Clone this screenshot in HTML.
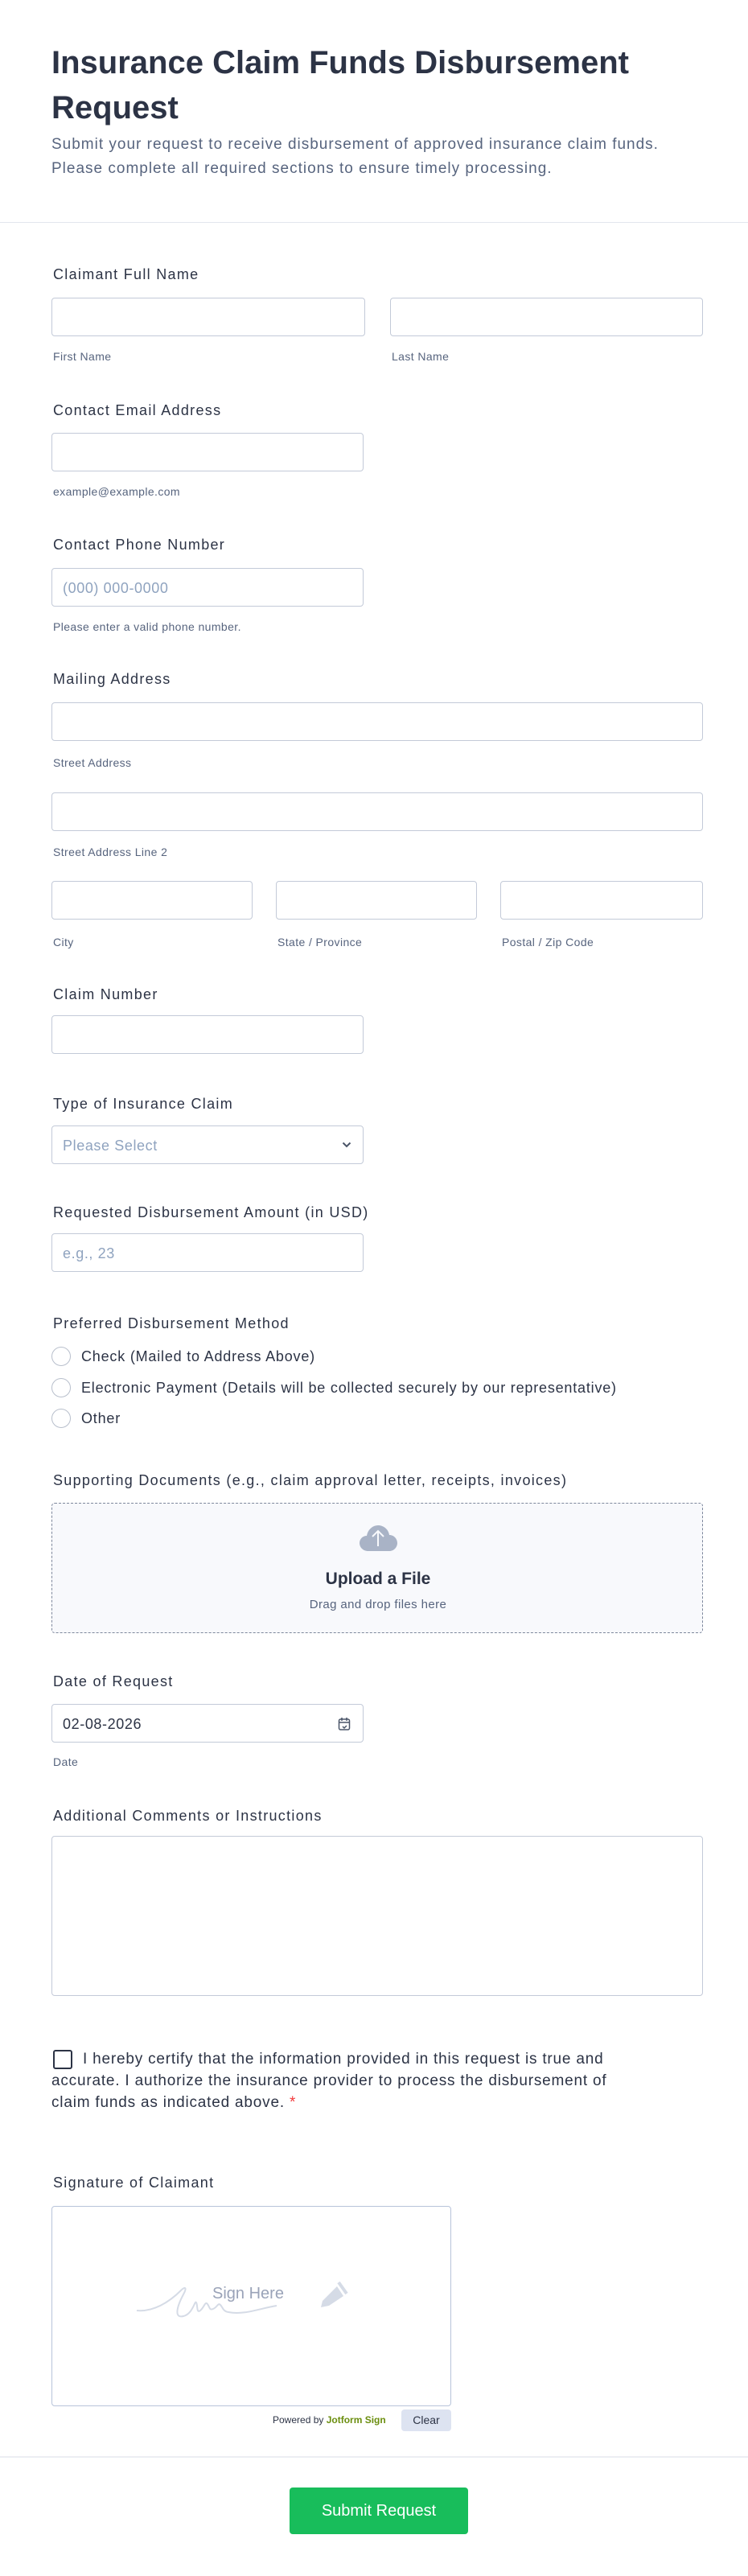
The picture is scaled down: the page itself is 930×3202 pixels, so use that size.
<!DOCTYPE html>
<html><head><meta charset="utf-8">
<style>
*{box-sizing:border-box;margin:0;padding:0}
body{width:930px;height:3202px;background:#fff;font-family:"Liberation Sans",sans-serif;color:#2c3345;position:relative;overflow:hidden}
.a{position:absolute;white-space:nowrap}
.t{font-size:40px;font-weight:bold;line-height:56px;left:64px;letter-spacing:0px;color:#2c3345}
.sub{font-size:19px;line-height:30px;left:64px;color:#57647e;letter-spacing:1px}
.lbl{font-size:18px;line-height:18px;left:66px;color:#2c3345;letter-spacing:1.3px}
.sl{font-size:14px;line-height:14px;color:#57647e;letter-spacing:0.4px}
.in{position:absolute;border:1px solid #c3cad8;border-radius:4px;background:#fff;height:48px}
.ph{font-size:18px;color:#8fa3bf;position:absolute;left:13px;top:14px;line-height:20px;letter-spacing:0.6px}
.hr{position:absolute;left:0;width:930px;height:1px;background:#e3e6ee}
.radio{position:absolute;left:64px;width:24px;height:24px;border:1px solid #b8bfcc;border-radius:50%;background:#fff}
.rt{font-size:18px;line-height:18px;left:101px;color:#2c3345;letter-spacing:0.8px}
</style></head><body>
<div class="a t" style="top:50px">Insurance Claim Funds Disbursement</div>
<div class="a t" style="top:106px">Request</div>
<div class="a sub" style="top:165px">Submit your request to receive disbursement of approved insurance claim funds.</div>
<div class="a sub" style="top:195px">Please complete all required sections to ensure timely processing.</div>
<div class="hr" style="top:276px"></div>

<div class="a lbl" style="top:332px">Claimant Full Name</div>
<div class="in" style="left:64px;top:370px;width:390px"></div>
<div class="in" style="left:485px;top:370px;width:389px"></div>
<div class="a sl" style="left:66px;top:436px">First Name</div>
<div class="a sl" style="left:487px;top:436px">Last Name</div>

<div class="a lbl" style="top:501px">Contact Email Address</div>
<div class="in" style="left:64px;top:538px;width:388px"></div>
<div class="a sl" style="left:66px;top:604px">example@example.com</div>

<div class="a lbl" style="top:668px">Contact Phone Number</div>
<div class="in" style="left:64px;top:706px;width:388px"><span class="ph">(000) 000-0000</span></div>
<div class="a sl" style="left:66px;top:772px">Please enter a valid phone number.</div>

<div class="a lbl" style="top:835px">Mailing Address</div>
<div class="in" style="left:64px;top:873px;width:810px"></div>
<div class="a sl" style="left:66px;top:941px">Street Address</div>
<div class="in" style="left:64px;top:985px;width:810px"></div>
<div class="a sl" style="left:66px;top:1052px">Street Address Line 2</div>
<div class="in" style="left:64px;top:1095px;width:250px"></div>
<div class="in" style="left:343px;top:1095px;width:250px"></div>
<div class="in" style="left:622px;top:1095px;width:252px"></div>
<div class="a sl" style="left:66px;top:1164px">City</div>
<div class="a sl" style="left:345px;top:1164px">State / Province</div>
<div class="a sl" style="left:624px;top:1164px">Postal / Zip Code</div>

<div class="a lbl" style="top:1227px">Claim Number</div>
<div class="in" style="left:64px;top:1262px;width:388px"></div>

<div class="a lbl" style="top:1363px">Type of Insurance Claim</div>
<div class="in" style="left:64px;top:1399px;width:388px"><span class="ph">Please Select</span>
<svg style="position:absolute;right:14px;top:19px" width="12" height="8" viewBox="0 0 12 8"><path d="M1.5 1.5 6 6l4.5-4.5" fill="none" stroke="#4a5568" stroke-width="2"/></svg></div>

<div class="a lbl" style="top:1498px">Requested Disbursement Amount (in USD)</div>
<div class="in" style="left:64px;top:1533px;width:388px"><span class="ph">e.g., 23</span></div>

<div class="a lbl" style="top:1636px">Preferred Disbursement Method</div>
<div class="radio" style="top:1674px"></div><div class="a rt" style="top:1677px">Check (Mailed to Address Above)</div>
<div class="radio" style="top:1713px"></div><div class="a rt" style="top:1716px">Electronic Payment (Details will be collected securely by our representative)</div>
<div class="radio" style="top:1751px"></div><div class="a rt" style="top:1754px">Other</div>

<div class="a lbl" style="top:1831px">Supporting Documents (e.g., claim approval letter, receipts, invoices)</div>
<div style="position:absolute;left:64px;top:1868px;width:810px;height:162px;border:1px dashed #7d879c;border-radius:4px;background:#f8f9fc"></div>
<svg style="position:absolute;left:446px;top:1895px" width="48" height="34" viewBox="0 0 48 34"><path d="M12 33C5 33 1 28 1 23c0-5 4-9 9-9 1-7 7-13 14-13s13 5 14 12c6 0 10 5 10 10s-4 10-10 10z" fill="#a9b3c6"/><path d="M24 27V9M17 15l7-7 7 7" fill="none" stroke="#f8f9fc" stroke-width="2"/></svg>
<div class="a" style="left:0;width:940px;text-align:center;top:1951px;font-size:21px;font-weight:bold;line-height:24px;color:#2c3345">Upload a File</div>
<div class="a" style="left:0;width:940px;text-align:center;top:1986px;font-size:15px;line-height:18px;color:#57647e;letter-spacing:0.4px">Drag and drop files here</div>

<div class="a lbl" style="top:2081px">Date of Request</div>
<div class="in" style="left:64px;top:2118px;width:388px"><span style="position:absolute;left:13px;top:14px;font-size:18px;line-height:20px;color:#2c3345;letter-spacing:0.6px">02-08-2026</span>
<svg style="position:absolute;left:355px;top:15px" width="16" height="18" viewBox="0 0 16 18"><rect x="1.5" y="3" width="13" height="13" rx="2" fill="none" stroke="#4a5568" stroke-width="1.5"/><path d="M1.5 7h13M5 1v4M11 1v4M6 12l2 2 3-3" fill="none" stroke="#4a5568" stroke-width="1.5"/></svg></div>
<div class="a sl" style="left:66px;top:2183px">Date</div>

<div class="a lbl" style="top:2248px">Additional Comments or Instructions</div>
<div class="in" style="left:64px;top:2282px;width:810px;height:199px"></div>

<div style="position:absolute;left:66px;top:2548px;width:24px;height:24px;border:2px solid #2c3345;border-radius:3px"></div>
<div style="position:absolute;left:64px;top:2546px;width:820px;white-space:nowrap;font-size:19px;line-height:27px;color:#2c3345;letter-spacing:0.8px"><span style="padding-left:39px"></span>I hereby certify that the information provided in this request is true and<br>accurate. I authorize the insurance provider to process the disbursement of<br>claim funds as indicated above. <span style="color:#f23a3c">*</span></div>

<div class="a lbl" style="top:2704px">Signature of Claimant</div>
<div style="position:absolute;left:64px;top:2742px;width:497px;height:249px;border:1px solid #b8c4da;border-radius:4px"></div>
<div class="a" style="left:264px;top:2840px;font-size:20px;line-height:22px;color:#9aa3b8">Sign Here</div>
<svg style="position:absolute;left:168px;top:2835px" width="285" height="60" viewBox="0 0 285 60"><path d="M2 37c20 2 40-10 55-25 5-5 8-4 3 5-8 15-12 30 0 27 12-3 14-20 16-17s0 14 5 10 6-12 9-8 2 8 7 6 6-8 9-5 3 8 10 9c20 4 40-5 60-8" fill="none" stroke="#d5dbe6" stroke-width="2"/><path d="M233 25l18-18 8 12-18 12-10 2z" fill="#d5dbe6"/><path d="M253 2l10 14" stroke="#d5dbe6" stroke-width="4"/></svg>
<div class="a" style="left:339px;top:3002px;font-size:12px;line-height:13px;color:#2c3345">Powered by <b style="color:#6b8e0f">Jotform Sign</b></div>
<div style="position:absolute;left:499px;top:2995px;width:62px;height:27px;background:#dde3f1;border-radius:4px;font-size:14px;line-height:27px;text-align:center;color:#2c3345">Clear</div>

<div class="hr" style="top:3053px;height:2px;background:#eceef3"></div>
<div style="position:absolute;left:360px;top:3092px;width:222px;height:58px;background:#18bd5b;border-radius:4px;color:#fff;font-size:20px;line-height:58px;text-align:center">Submit Request</div>
</body></html>
